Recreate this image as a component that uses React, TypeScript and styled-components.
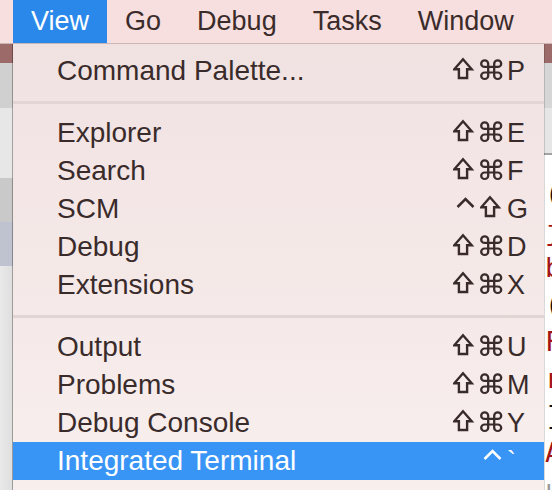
import { FC } from "react";
import styled, { createGlobalStyle } from "styled-components";

const GlobalStyle = createGlobalStyle`
  html, body {
    margin: 0;
    padding: 0;
  }
  body {
    width: 552px;
    height: 490px;
    overflow: hidden;
    background: #ffffff;
    font-family: "Liberation Sans", Arial, sans-serif;
  }
`;

const Screen = styled.div`
  position: relative;
  width: 552px;
  height: 490px;
  overflow: hidden;
  display: flex;
  flex-direction: column;
`;

const MenuBar = styled.div`
  display: flex;
  height: 43px;
  padding-left: 13px;
  background: #f6dfde;
  border-bottom: 1px solid #c9b7b6;
`;

const MenuTitle = styled.div<{ $active?: boolean }>`
  padding: 0 18px;
  font-size: 27px;
  line-height: 43px;
  color: ${({ $active }) => ($active ? "#ffffff" : "#3b2b2b")};
  background: ${({ $active }) => ($active ? "#2a88ea" : "transparent")};
`;

const Workspace = styled.div`
  flex: 1;
  display: flex;
`;

const Rail = styled.div<{ $width: number }>`
  width: ${({ $width }) => $width}px;
  display: flex;
  flex-direction: column;
`;

const Band = styled.div<{ $h?: number; $bg: string }>`
  height: ${({ $h }) => ($h ? `${$h}px` : "auto")};
  flex: ${({ $h }) => ($h ? "none" : "1")};
  background: ${({ $bg }) => $bg};
`;

const Middle = styled.div`
  flex: 1;
  background: #f4f4f4;
`;

const CodePane = styled.div`
  flex: 1;
  background: #ffffff;
  padding: 20px 0 0 1px;
  font-family: "DejaVu Sans Mono", "Liberation Mono", monospace;
  font-size: 27px;
  line-height: 37px;
  white-space: pre;
  overflow: hidden;
`;

const CodeLine = styled.div<{ $color: string }>`
  color: ${({ $color }) => $color};
`;

const Dropdown = styled.div`
  position: absolute;
  top: 44px;
  left: 13px;
  width: 531px;
  bottom: 0;
  padding-top: 8px;
  background: linear-gradient(#f1e2e2, #f8efed);
  box-shadow: -1px 0 0 rgba(0, 0, 0, 0.3), 1px 0 0 rgba(0, 0, 0, 0.15);
`;

const Item = styled.div<{ $selected?: boolean }>`
  display: flex;
  justify-content: space-between;
  height: 38px;
  padding: 0 14px 0 44px;
  color: ${({ $selected }) => ($selected ? "#ffffff" : "#3a2b2b")};
  background: ${({ $selected }) => ($selected ? "#3895f6" : "transparent")};
`;

const Label = styled.span`
  font-size: 28px;
  line-height: 38px;
`;

const Shortcut = styled.div`
  display: flex;
  height: 38px;
`;

const Key = styled.span`
  width: 23px;
  font-size: 27px;
  line-height: 38px;
`;

const Separator = styled.div`
  height: 24px;
  display: flex;
  align-items: center;
  &::after {
    content: "";
    flex: 1;
    height: 3px;
    background: #e2d5d4;
  }
`;

type Mod = "shift" | "cmd" | "ctrl";

const ModGlyph: FC<{ mod: Mod }> = ({ mod }) => (
  <svg width="27" height="38" viewBox="0 0 27 38" fill="none" stroke="currentColor">
    {mod === "shift" && (
      <path d="M10 7.3 L1.3 17.3 H5.9 V26 H14.1 V17.3 H18.7 Z" strokeWidth="2.4" strokeLinejoin="miter" />
    )}
    {mod === "cmd" && (
      <g transform="translate(1.2 8.4) scale(1 0.93)">
        <path
          d="M7 3.5 V16.5 A3.5 3.5 0 1 1 3.5 13 H16.5 A3.5 3.5 0 1 1 13 16.5 V3.5 A3.5 3.5 0 1 1 16.5 7 H3.5 A3.5 3.5 0 1 1 7 3.5 Z"
          strokeWidth="2.3"
        />
      </g>
    )}
    {mod === "ctrl" && <path d="M4.5 17 L12.5 9 L20.5 17" strokeWidth="2.5" />}
  </svg>
);

type Entry =
  | { kind: "sep" }
  | { kind: "item"; label: string; mods: Mod[]; key: string; selected?: boolean };

const entries: Entry[] = [
  { kind: "item", label: "Command Palette...", mods: ["shift", "cmd"], key: "P" },
  { kind: "sep" },
  { kind: "item", label: "Explorer", mods: ["shift", "cmd"], key: "E" },
  { kind: "item", label: "Search", mods: ["shift", "cmd"], key: "F" },
  { kind: "item", label: "SCM", mods: ["ctrl", "shift"], key: "G" },
  { kind: "item", label: "Debug", mods: ["shift", "cmd"], key: "D" },
  { kind: "item", label: "Extensions", mods: ["shift", "cmd"], key: "X" },
  { kind: "sep" },
  { kind: "item", label: "Output", mods: ["shift", "cmd"], key: "U" },
  { kind: "item", label: "Problems", mods: ["shift", "cmd"], key: "M" },
  { kind: "item", label: "Debug Console", mods: ["shift", "cmd"], key: "Y" },
  { kind: "item", label: "Integrated Terminal", mods: ["ctrl"], key: "`", selected: true },
];

const menuTitles = ["View", "Go", "Debug", "Tasks", "Window"];

const code: [string, string][] = [
  ["(", "#111111"],
  ["j", "#a31515"],
  ["b", "#a31515"],
  ["(", "#111111"],
  ["F", "#a31515"],
  ["r", "#a31515"],
  ["]", "#111111"],
  ["A", "#a31515"],
  ["u", "#9a9a9a"],
];

const App: FC = () => {
  return (
    <Screen>
      <GlobalStyle />
      <MenuBar>
        {menuTitles.map((t) => (
          <MenuTitle key={t} $active={t === "View"}>
            {t}
          </MenuTitle>
        ))}
      </MenuBar>
      <Workspace>
        <Rail $width={13}>
          <Band $h={19} $bg="#9b6a69" />
          <Band $h={45} $bg="#d0d0d0" />
          <Band $h={70} $bg="#e7e7e7" />
          <Band $h={44} $bg="#c9c9c9" />
          <Band $h={44} $bg="#bfc2cf" />
          <Band $bg="linear-gradient(90deg, #e9e9e9, #dedede)" />
        </Rail>
        <Middle />
        <Rail $width={8}>
          <Band $h={19} $bg="#9b6a69" />
          <Band $h={45} $bg="#d6d6d6" />
          <Band $h={45} $bg="#e6e6e6" />
          <Band $h={2} $bg="#a2a2a2" />
          <CodePane>
            {code.map(([ch, color], i) => (
              <CodeLine key={i} $color={color}>
                {ch}
              </CodeLine>
            ))}
          </CodePane>
        </Rail>
      </Workspace>
      <Dropdown>
        {entries.map((e, i) =>
          e.kind === "sep" ? (
            <Separator key={i} />
          ) : (
            <Item key={i} $selected={e.selected}>
              <Label>{e.label}</Label>
              <Shortcut>
                {e.mods.map((m, j) => (
                  <ModGlyph key={j} mod={m} />
                ))}
                <Key>{e.key}</Key>
              </Shortcut>
            </Item>
          )
        )}
      </Dropdown>
    </Screen>
  );
};

export default App;
